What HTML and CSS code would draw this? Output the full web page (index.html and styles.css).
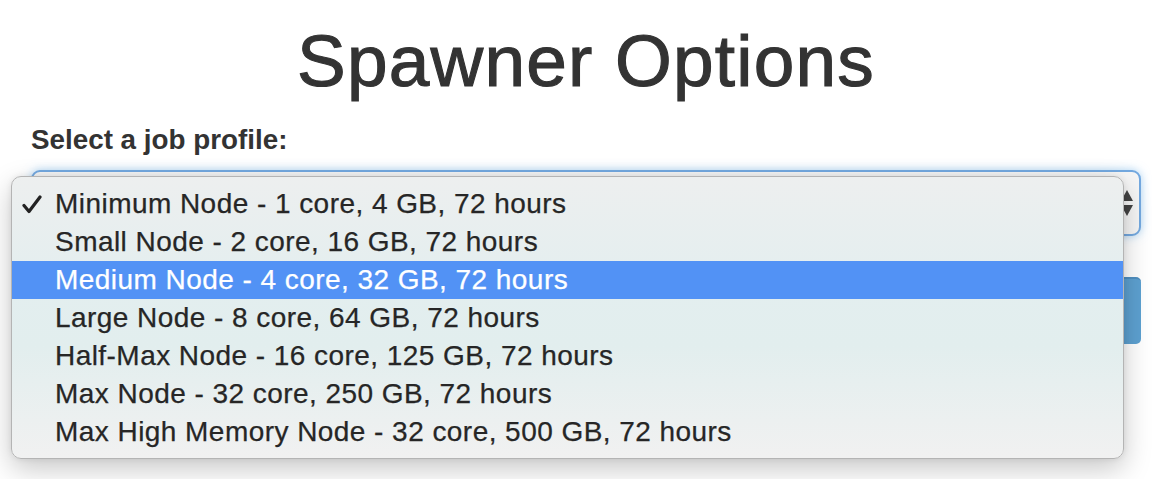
FILE: index.html
```html
<!DOCTYPE html>
<html>
<head>
<meta charset="utf-8">
<title>Spawner Options</title>
<link rel="stylesheet" href="styles.css">
</head>
<body>
<div class="page">
  <h1 class="title">Spawner Options</h1>
  <div class="form">
    <label class="label">Select a job profile:</label>
    <div class="select">
      <svg class="arrows" width="14" height="26" viewBox="0 0 14 26">
        <polygon points="7,0 13,11 1,11" fill="#444"/>
        <polygon points="1,15 13,15 7,26" fill="#444"/>
      </svg>
    </div>
    <div class="button"></div>
  </div>
  <ul class="menu">
    <li class="item"><span class="check"><svg width="20" height="20" viewBox="0 0 20 20"><polyline points="2,10.5 7,16.5 18,2" fill="none" stroke="#222" stroke-width="3.2" stroke-linecap="round" stroke-linejoin="round"/></svg></span>Minimum Node - 1 core, 4 GB, 72 hours</li>
    <li class="item"><span class="check"></span>Small Node - 2 core, 16 GB, 72 hours</li>
    <li class="item active"><span class="check"></span>Medium Node - 4 core, 32 GB, 72 hours</li>
    <li class="item"><span class="check"></span>Large Node - 8 core, 64 GB, 72 hours</li>
    <li class="item"><span class="check"></span>Half-Max Node - 16 core, 125 GB, 72 hours</li>
    <li class="item"><span class="check"></span>Max Node - 32 core, 250 GB, 72 hours</li>
    <li class="item"><span class="check"></span>Max High Memory Node - 32 core, 500 GB, 72 hours</li>
  </ul>
</div>
</body>
</html>
```

FILE: styles.css
```css
html, body {
  margin: 0;
  padding: 0;
  background: #ffffff;
}
.page {
  position: relative;
  width: 1164px;
  height: 479px;
  overflow: hidden;
  font-family: "Liberation Sans", Arial, sans-serif;
  color: #333333;
}
.title {
  margin: 0;
  padding-top: 21px;
  font-size: 73px;
  line-height: 80px;
  font-weight: 400;
  letter-spacing: 1.2px;
  -webkit-text-stroke: 1.1px #333333;
  text-align: center;
  padding-left: 8px;
  color: #333333;
}
.form {
  margin-top: 22px;
  padding-left: 31px;
  width: 1110px;
  display: flex;
  flex-direction: column;
}
.label {
  font-size: 27.8px;
  line-height: 34px;
  font-weight: 700;
  color: #333333;
}
.select {
  margin-top: 13px;
  height: 66px;
  box-sizing: border-box;
  border: 2px solid #74a9e0;
  border-radius: 9px;
  background: #f6f6f6;
  box-shadow: 0 0 10px rgba(102, 175, 233, 0.55);
  display: flex;
  align-items: center;
  justify-content: flex-end;
  padding-right: 5px;
}
.arrows {
  display: block;
}
.button {
  margin-top: 41px;
  height: 67px;
  border-radius: 5px;
  background: #5da1d1;
  border-top: 2px solid #4f8fc0;
  box-sizing: border-box;
}
.menu {
  position: absolute;
  left: 11px;
  top: 176px;
  width: 1113px;
  height: 283px;
  box-sizing: border-box;
  margin: 0;
  padding: 8px 0 8px 0;
  list-style: none;
  border: 1px solid #b4b4b4;
  border-radius: 10px;
  background: linear-gradient(to bottom, #edefef 0%, #e3eeef 40%, #e2eeee 60%, #f1f1f1 100%);
  box-shadow: 0 10px 28px rgba(0, 0, 0, 0.22), 0 0 6px rgba(0, 0, 0, 0.08);
}
.item {
  display: flex;
  align-items: center;
  height: 38px;
  padding-top: 1px;
  padding-bottom: 1px;
  box-sizing: border-box;
  font-size: 28px;
  letter-spacing: 0.45px;
  -webkit-text-stroke: 0.25px #262626;
  color: #262626;
  white-space: nowrap;
}
.item.active {
  background: #5292f5;
  color: #ffffff;
  -webkit-text-stroke: 0.25px #ffffff;
}
.check {
  width: 43px;
  flex: none;
  display: flex;
  align-items: center;
  padding-left: 10px;
  box-sizing: border-box;
  padding-top: 2px;
}
.check svg {
  display: block;
}
```
